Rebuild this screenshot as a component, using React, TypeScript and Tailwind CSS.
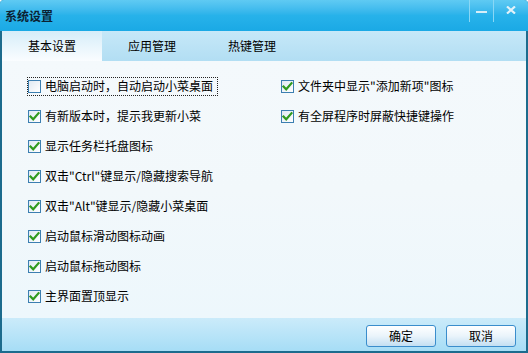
import React from "react";

const font = { fontFamily: '"Noto Sans CJK SC", "Noto Sans", sans-serif' };

function Check({ checked }: { checked: boolean }) {
  return (
    <div className="relative w-[13px] h-[13px] shrink-0 border border-[#3c7fb1] bg-gradient-to-br from-[#dfe9f2] to-white">
      {checked && (
        <svg viewBox="0 0 13 13" className="absolute left-[-1px] top-[-1px] w-[13px] h-[13px]">
          <path d="M2.5 6.5 L5.2 9.3 L10.5 3.2" fill="none" stroke="#2f9a1e" strokeWidth="2.2" strokeLinecap="square" />
        </svg>
      )}
    </div>
  );
}

function Item({ label, checked, focus }: { label: string; checked: boolean; focus?: boolean }) {
  return (
    <div className="h-[30px] flex items-center">
      <div className={"flex items-center gap-[4px] h-[19px] pr-[4px] " + (focus ? "border border-dotted border-[#222] ml-[-1px]" : "")}>
        <Check checked={checked} />
        <span className="text-[12px] leading-none text-black whitespace-nowrap">{label}</span>
      </div>
    </div>
  );
}

export default function App() {
  const left = [
    { l: "电脑启动时，自动启动小菜桌面", c: false, f: true },
    { l: "有新版本时，提示我更新小菜", c: true },
    { l: "显示任务栏托盘图标", c: true },
    { l: '双击"Ctrl"键显示/隐藏搜索导航', c: true },
    { l: '双击"Alt"键显示/隐藏小菜桌面', c: true },
    { l: "启动鼠标滑动图标动画", c: true },
    { l: "启动鼠标拖动图标", c: true },
    { l: "主界面置顶显示", c: true },
  ];
  const right = [
    { l: '文件夹中显示"添加新项"图标', c: true },
    { l: "有全屏程序时屏蔽快捷键操作", c: true },
  ];
  return (
    <div style={font} className="w-[528px] h-[353px] flex flex-col overflow-hidden rounded-t-[4px] bg-[#1c6b8d]">
      {/* title bar */}
      <div className="h-[31px] shrink-0 flex items-center bg-gradient-to-b from-[#5fcaf3] via-[#27b2ea] to-[#1aa9e5] relative">
        <span className="ml-[5px] text-[12px] font-bold text-[#0b2233]">系统设置</span>
        <div className="ml-auto flex h-full items-start">
          <div className="w-px h-[22px] bg-[#8ad7f5]"></div>
          <div className="w-[23px] h-[22px] flex items-center justify-center">
            <div className="w-[11px] h-[2px] bg-[#d6eef8] mt-[2px]"></div>
          </div>
          <div className="w-px h-[22px] bg-[#8ad7f5]"></div>
          <div className="w-[34px] h-[22px] flex items-center justify-center">
            <svg viewBox="0 0 10 8" className="w-[10px] h-[8px] mt-[-2px]">
              <path d="M1 0.5 L9 7.5 M9 0.5 L1 7.5" stroke="#e2f2f9" strokeWidth="2.2" />
            </svg>
          </div>
        </div>
      </div>
      {/* body with side borders */}
      <div className="flex-1 flex flex-col mx-[2px] mb-[2px]">
        {/* tabs */}
        <div className="h-[30px] shrink-0 flex bg-gradient-to-b from-[#c6e8f8] to-[#b2def3]">
          <div className="w-[100px] flex items-center justify-center bg-gradient-to-b from-[#d6edf9] to-[#fafdff] text-[12px] text-black">基本设置</div>
          <div className="w-[100px] flex items-center justify-center text-[12px] text-black">应用管理</div>
          <div className="w-[100px] flex items-center justify-center text-[12px] text-black">热键管理</div>
        </div>
        {/* content */}
        <div className="flex-1 flex bg-gradient-to-b from-[#f4f9fc] via-[#f2f8fb] to-[#edf7fc] pt-[1px]">
          <div className="w-[279px] pl-[26px] pt-[9px]">
            {left.map((it) => (
              <Item key={it.l} label={it.l} checked={it.c} focus={it.f} />
            ))}
          </div>
          <div className="pt-[9px]">
            {right.map((it) => (
              <Item key={it.l} label={it.l} checked={it.c} />
            ))}
          </div>
        </div>
        {/* footer */}
        <div className="h-[33px] shrink-0 flex items-center justify-end gap-[10px] pr-[10px] pt-[2px] bg-gradient-to-b from-[#cbebfa] to-[#a6ddf6]">
          <button className="w-[70px] h-[22px] rounded-[3px] border border-[#3a8dcc] bg-gradient-to-b from-white via-[#eaf4fb] to-[#c3dff2] text-[12px] text-black">确定</button>
          <button className="w-[70px] h-[22px] rounded-[3px] border border-[#3a8dcc] bg-gradient-to-b from-white via-[#eaf4fb] to-[#c3dff2] text-[12px] text-black">取消</button>
        </div>
      </div>
    </div>
  );
}
